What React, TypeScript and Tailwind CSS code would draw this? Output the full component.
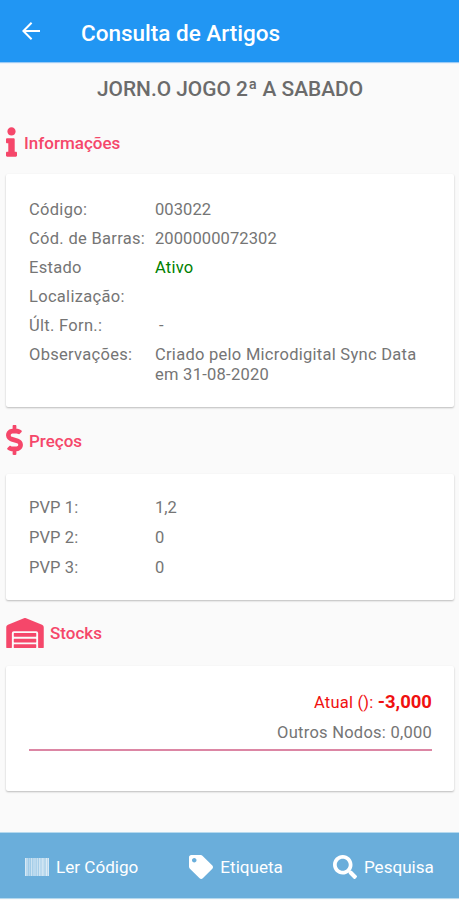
import type { ReactNode } from "react";
import { FaBarcode, FaDollarSign, FaInfo, FaSearch, FaTag, FaWarehouse } from "react-icons/fa";

const infoRows = [
  { label: "Código:", value: "003022", style: "tracking-[0.1px]" },
  { label: "Cód. de Barras:", value: "2000000072302", style: "tracking-[0.1px]" },
  { label: "Estado", value: "Ativo", style: "tracking-[0.2px] text-[#008000]" },
  { label: "Localização:", value: "" },
  { label: "Últ. Forn.:", value: "\u00a0-" },
  { label: "Observações:", value: "Criado pelo Microdigital Sync Data em 31-08-2020", style: "tracking-[0.27px]" },
];

const priceRows = [
  { label: "PVP 1:", value: "1,2" },
  { label: "PVP 2:", value: "0" },
  { label: "PVP 3:", value: "0" },
];

const BackArrow = () => (
  <svg className="h-[18px] w-[18px]" fill="none" stroke="currentColor" strokeWidth="2" viewBox="0 0 18 18">
    <path d="M18 9H1.5M9.6 .8L1.4 9l8.2 8.2" />
  </svg>
);

function SectionTitle({ icon, children }: { icon: ReactNode; children: ReactNode }) {
  return (
    <div className="flex h-[31px] items-center pl-1.5 text-[#f5476a]">
      {icon}
      <h2 className="text-[17px] leading-5 font-medium">{children}</h2>
    </div>
  );
}

function Card({ className, children }: { className: string; children: ReactNode }) {
  return (
    <section
      className={`ml-1.5 mr-[5px] rounded-[2px] bg-white pr-[22px] pl-[23px] shadow-[0_1px_2px_rgba(0,0,0,0.25)] ${className}`}
    >
      {children}
    </section>
  );
}

export default function App() {
  return (
    <div className="flex h-[900px] w-[459px] flex-col bg-[#fafafa] font-[Roboto,sans-serif] text-[16.5px] leading-5 text-[#757575]">
      <header className="flex h-[62px] shrink-0 items-center bg-[#2196f3] pl-[22px] text-white shadow-[0_1px_1px_#9ccbf5]">
        <BackArrow />
        <h1 className="ml-[41px] pt-1 text-[22.5px] leading-7 font-medium">Consulta de Artigos</h1>
      </header>

      <main className="flex-1">
        <p className="mt-[15px] mb-[26px] pl-px text-center text-[20.9px] leading-6 font-medium text-[#6b6b6b]">
          JORN.O JOGO 2ª A SABADO
        </p>

        <SectionTitle icon={<FaInfo className="mr-[7px] mb-px h-[30px] w-[11px]" />}>Informações</SectionTitle>
        <Card className="mt-4 h-[233px] pt-[26px]">
          <dl className="grid grid-cols-[126px_1fr] gap-y-[9px]">
            {infoRows.map((row) => (
              <div key={row.label} className="contents">
                <dt className="tracking-[0.3px] whitespace-nowrap">{row.label}</dt>
                <dd className={row.style}>{row.value}</dd>
              </div>
            ))}
          </dl>
        </Card>

        <div className="mt-[18px]">
          <SectionTitle icon={<FaDollarSign className="mr-1.5 mb-px h-[30px] w-[17px]" />}>Preços</SectionTitle>
        </div>
        <Card className="mt-[18px] h-[126px] pt-6">
          <dl className="grid grid-cols-[126px_1fr] gap-y-2.5">
            {priceRows.map((row) => (
              <div key={row.label} className="contents">
                <dt className="tracking-[0.1px]">{row.label}</dt>
                <dd>{row.value}</dd>
              </div>
            ))}
          </dl>
        </Card>

        <div className="mt-[17px]">
          <SectionTitle icon={<FaWarehouse className="mr-1.5 h-[30px] w-[38px]" />}>Stocks</SectionTitle>
        </div>
        <Card className="mt-[18px] h-[125px] pt-[26px]">
          <div className="text-right">
            <p className="text-[#f01010]">
              <span className="tracking-[0.2px]">Atual (): </span>
              <strong className="text-[18.5px] font-bold">-3,000</strong>
            </p>
            <p className="mt-2.5 tracking-[0.25px]">Outros Nodos: 0,000</p>
          </div>
          <div className="mt-[6px] h-[2px] bg-[#dc86a4]" />
        </Card>
      </main>

      <footer className="mb-px flex h-[67px] shrink-0 items-center border-y border-[#b5d9ee] bg-[#6aaedb] pt-[3px] text-[17.1px] text-white">
        <button className="ml-[25px] flex items-center">
          <span className="mr-[7px] flex h-[18px] w-6 items-center overflow-hidden bg-white/35">
            <FaBarcode className="h-6 w-6 shrink-0 opacity-70" />
          </span>
          Ler Código
        </button>
        <button className="ml-[51px] flex items-center">
          <FaTag className="mr-[7px] h-6 w-6" />
          Etiqueta
        </button>
        <button className="ml-[50px] flex items-center">
          <FaSearch className="mr-[7px] h-6 w-6" />
          Pesquisa
        </button>
      </footer>
    </div>
  );
}
